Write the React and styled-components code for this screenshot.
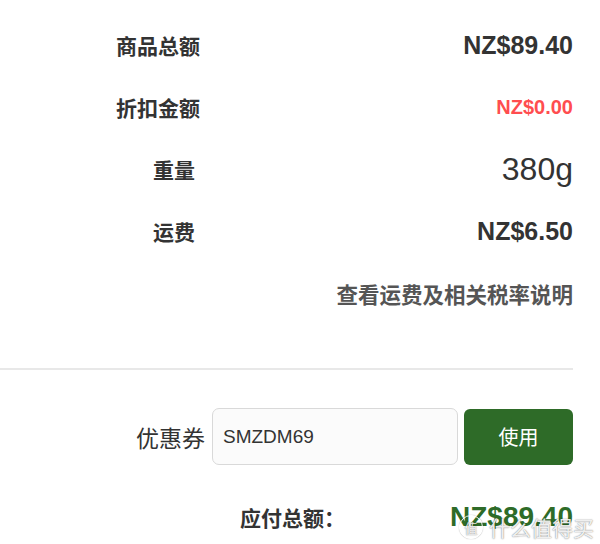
import React from "react";
import styled, { createGlobalStyle } from "styled-components";

const GlobalStyle = createGlobalStyle`
  html, body {
    margin: 0;
    padding: 0;
    background: #ffffff;
  }
  body {
    font-family: "Liberation Sans", "Noto Sans CJK SC", Arial, sans-serif;
    color: #333333;
  }
`;

const Page = styled.div`
  position: relative;
  width: 600px;
  height: 544px;
  overflow: hidden;
  background: #ffffff;
`;

const Summary = styled.div`
  display: grid;
  grid-template-columns: 200px 1fr;
  grid-auto-rows: 62px;
  padding: 14px 27px 0 0;
`;

const Label = styled.div`
  display: flex;
  align-items: center;
  justify-content: flex-end;
  font-family: "Noto Sans CJK SC", sans-serif;
  font-weight: 700;
  font-size: 21px;
  color: #333333;
  padding-right: ${(p) => p.$inset || 0}px;
`;

const Value = styled.div`
  display: flex;
  align-items: center;
  justify-content: flex-end;
  font-family: "Liberation Sans", Arial, sans-serif;
  font-weight: ${(p) => (p.$light ? 400 : 700)};
  font-size: ${(p) => p.$size || 25}px;
  color: ${(p) => p.$color || "#333333"};
`;

const InfoLink = styled.a`
  grid-column: 1 / span 2;
  display: flex;
  align-items: center;
  justify-content: flex-end;
  font-family: "Noto Sans CJK SC", sans-serif;
  font-weight: 700;
  font-size: 21.5px;
  color: #555555;
  text-decoration: none;
  cursor: pointer;
`;

const Divider = styled.hr`
  margin: 44px 27px 0 0;
  border: 0;
  height: 2px;
  background: #e8e8e8;
`;

const CouponRow = styled.div`
  display: flex;
  align-items: center;
  margin-top: 38px;
  padding-right: 27px;
  height: 57px;
`;

const CouponLabel = styled.label`
  width: 212px;
  padding-right: 7px;
  box-sizing: border-box;
  text-align: right;
  font-family: "Noto Sans CJK SC", sans-serif;
  font-size: 23px;
  color: #333333;
`;

const CouponInput = styled.input`
  width: 246px;
  height: 57px;
  box-sizing: border-box;
  padding: 0 10px;
  border: 1px solid #d9d9d9;
  border-radius: 7px;
  background: #fbfbfb;
  font-family: "Liberation Sans", Arial, sans-serif;
  font-size: 19px;
  color: #333333;
  outline: none;
`;

const UseButton = styled.button`
  margin-left: 6px;
  width: 109px;
  height: 56px;
  border: 0;
  border-radius: 6px;
  background: #2e6b28;
  color: #ffffff;
  font-family: "Noto Sans CJK SC", sans-serif;
  font-size: 20px;
  cursor: pointer;
`;

const TotalRow = styled.div`
  display: flex;
  align-items: center;
  justify-content: space-between;
  margin-top: 32px;
  padding: 0 27px 0 240px;
  height: 40px;
`;

const TotalLabel = styled.span`
  font-family: "Noto Sans CJK SC", sans-serif;
  font-weight: 700;
  font-size: 21px;
  color: #333333;
`;

const TotalValue = styled.span`
  font-family: "Liberation Sans", Arial, sans-serif;
  font-weight: 700;
  font-size: 28px;
  color: #2e6b28;
`;

const Watermark = styled.div`
  position: absolute;
  right: 6px;
  bottom: 2px;
  display: flex;
  align-items: center;
  gap: 6px;
  font-family: "Noto Sans CJK SC", sans-serif;
  font-size: 21px;
  color: rgba(255, 255, 255, 0.9);
  text-shadow: 0 0 1px rgba(0, 0, 0, 0.45), 0 0 2px rgba(0, 0, 0, 0.25);
  pointer-events: none;
`;

const Badge = styled.span`
  display: inline-flex;
  align-items: center;
  justify-content: center;
  width: 22px;
  height: 22px;
  border-radius: 50%;
  border: 1.5px solid rgba(255, 255, 255, 0.9);
  box-shadow: 0 0 1px rgba(0, 0, 0, 0.45);
  font-size: 13px;
`;

const rows = [
  { label: "商品总额", value: "NZ$89.40" },
  { label: "折扣金额", value: "NZ$0.00", size: 20, color: "#ff4d4f" },
  { label: "重量", value: "380g", size: 32, light: true, inset: 5 },
  { label: "运费", value: "NZ$6.50", inset: 5 },
];

export default function App() {
  return (
    <>
      <GlobalStyle />
      <Page>
        <Summary>
          {rows.map((r) => (
            <React.Fragment key={r.label}>
              <Label $inset={r.inset}>{r.label}</Label>
              <Value $size={r.size} $color={r.color} $light={r.light}>
                {r.value}
              </Value>
            </React.Fragment>
          ))}
          <InfoLink>查看运费及相关税率说明</InfoLink>
        </Summary>
        <Divider />
        <CouponRow>
          <CouponLabel htmlFor="coupon">优惠券</CouponLabel>
          <CouponInput id="coupon" defaultValue="SMZDM69" />
          <UseButton>使用</UseButton>
        </CouponRow>
        <TotalRow>
          <TotalLabel>应付总额：</TotalLabel>
          <TotalValue>NZ$89.40</TotalValue>
        </TotalRow>
        <Watermark>
          <Badge>值</Badge>
          <span>什么值得买</span>
        </Watermark>
      </Page>
    </>
  );
}
